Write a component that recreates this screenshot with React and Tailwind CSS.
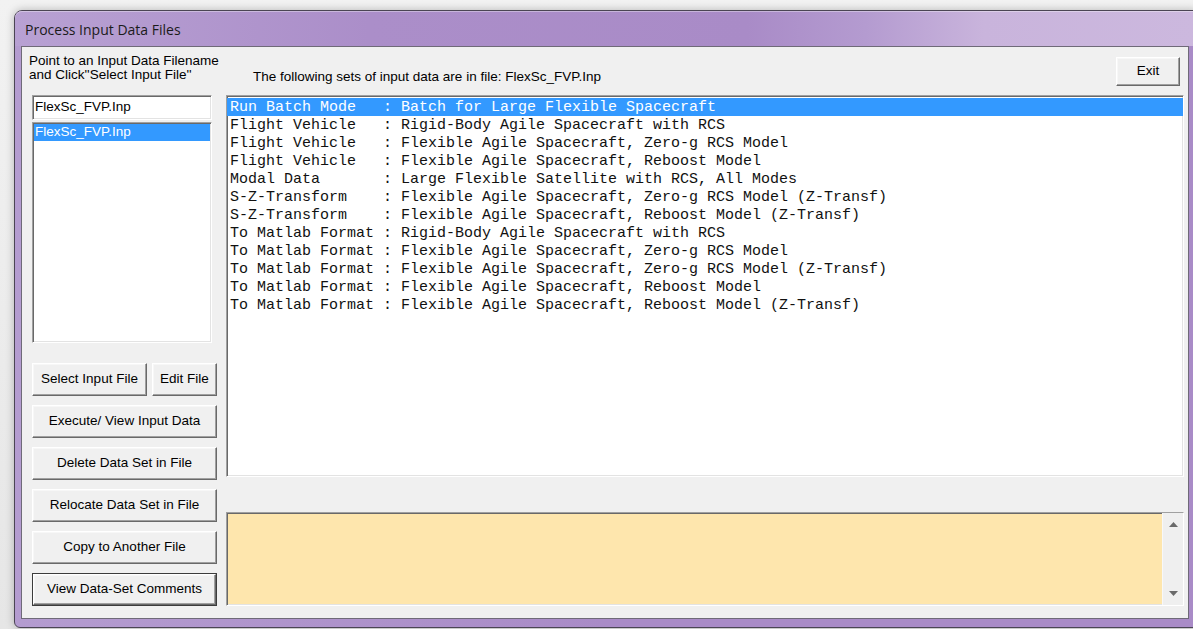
import React, { useState } from "react";

const ui = "font-['Liberation_Sans',Arial,sans-serif] text-[13.5px] text-black";
const mono = "font-['Liberation_Mono','Courier_New',monospace] text-[15px] text-[#111]";

// classic 3D edges
const sunken =
  "border border-t-[#a0a0a0] border-l-[#a0a0a0] border-r-white border-b-white shadow-[inset_1px_1px_0_#696969,inset_-1px_-1px_0_#e3e3e3]";
const raised =
  "border border-t-white border-l-white border-r-[#696969] border-b-[#696969] shadow-[inset_-1px_-1px_0_#a0a0a0,inset_1px_1px_0_#f7f7f7] bg-[#f0f0f0]";

const dataSets = [
  "Run Batch Mode   : Batch for Large Flexible Spacecraft",
  "Flight Vehicle   : Rigid-Body Agile Spacecraft with RCS",
  "Flight Vehicle   : Flexible Agile Spacecraft, Zero-g RCS Model",
  "Flight Vehicle   : Flexible Agile Spacecraft, Reboost Model",
  "Modal Data       : Large Flexible Satellite with RCS, All Modes",
  "S-Z-Transform    : Flexible Agile Spacecraft, Zero-g RCS Model (Z-Transf)",
  "S-Z-Transform    : Flexible Agile Spacecraft, Reboost Model (Z-Transf)",
  "To Matlab Format : Rigid-Body Agile Spacecraft with RCS",
  "To Matlab Format : Flexible Agile Spacecraft, Zero-g RCS Model",
  "To Matlab Format : Flexible Agile Spacecraft, Zero-g RCS Model (Z-Transf)",
  "To Matlab Format : Flexible Agile Spacecraft, Reboost Model",
  "To Matlab Format : Flexible Agile Spacecraft, Reboost Model (Z-Transf)",
];

function Button({ children, className = "", isDefault = false }) {
  if (isDefault) {
    return (
      <div className={`border border-[#3c3c3c] ${className}`}>
        <button className={`${raised} ${ui} w-full h-full flex items-center justify-center`}>
          {children}
        </button>
      </div>
    );
  }
  return (
    <button className={`${raised} ${ui} flex items-center justify-center ${className}`}>
      {children}
    </button>
  );
}

export default function App() {
  const [selected, setSelected] = useState(0);

  return (
    <div className="w-[1193px] h-[629px] overflow-hidden bg-gradient-to-b from-[#f2f2f2] to-[#e6e6e6] pl-[14px] pt-[10px]">
      {/* window */}
      <div className="w-[1183px] h-[618px] rounded-tl-[8px] rounded-bl-[6px] border border-[#4b4554] bg-gradient-to-r from-[#b49cd0] via-[#a98bc7] to-[#a98bc7] flex flex-col shadow-[0_0_8px_rgba(0,0,0,0.25)]">
        {/* title bar */}
        <div className="h-[35px] shrink-0 rounded-tl-[7px] flex items-center pl-[10px] pt-[1px] bg-[linear-gradient(90deg,#b8a1d3_0%,#ab8ec9_30%,#a98bc7_62%,#b49bd0_72%,#c9b4dc_82%,#ccb8de_100%)] shadow-[inset_0_1px_0_rgba(255,255,255,0.35)]">
          <span className="font-['Open_Sans','Noto_Sans',sans-serif] text-[14px] text-[#1b1b1b]">
            Process Input Data Files
          </span>
        </div>

        {/* client area */}
        <div className="ml-[6px] mr-[7px] h-[573px] shrink-0 border border-[#6f6a78] bg-[#f0f0f0] flex pt-[7px] pl-[10px] pr-[4px]">
          {/* left column */}
          <div className="w-[185px] shrink-0 flex flex-col">
            <div className={`${ui} leading-[14px] whitespace-nowrap -ml-[3px]`}>
              <div>Point to an Input Data Filename</div>
              <div>and Click''Select Input File''</div>
            </div>

            <div className={`${sunken} mt-[13px] w-[180px] h-[25px] bg-white flex items-center pl-[2px] ${ui}`}>
              FlexSc_FVP.Inp
            </div>

            <div className={`${sunken} mt-[2px] w-[180px] h-[221px] bg-white p-[1px]`}>
              <div className={`h-[17px] bg-[#3399ff] flex items-center pl-[1px] ${ui} !text-white`}>
                FlexSc_FVP.Inp
              </div>
            </div>

            <div className="mt-[20px] flex gap-[5px] h-[33px]">
              <Button className="w-[115px] h-[33px]">Select Input File</Button>
              <Button className="flex-1 h-[33px]">Edit File</Button>
            </div>
            <Button className="mt-[9px] h-[33px] w-full">Execute/ View Input Data</Button>
            <Button className="mt-[9px] h-[33px] w-full">Delete Data Set in File</Button>
            <Button className="mt-[9px] h-[33px] w-full">Relocate Data Set in File</Button>
            <Button className="mt-[9px] h-[33px] w-full">Copy to Another File</Button>
            <Button className="mt-[9px] h-[33px] w-full" isDefault>
              View Data-Set Comments
            </Button>
          </div>

          {/* right column */}
          <div className="ml-[9px] flex-1 flex flex-col">
            <div className="h-[41px] flex">
              <div className={`${ui} pl-[27px] pt-[16px] leading-[14px]`}>
                The following sets of input data are in file: FlexSc_FVP.Inp
              </div>
              <Button className="ml-auto mr-[4px] mt-[3px] w-[64px] h-[29px]">Exit</Button>
            </div>

            <div className={`${sunken} h-[382px] bg-white pt-[2px] overflow-hidden`}>
              {dataSets.map((row, i) => (
                <div
                  key={i}
                  onClick={() => setSelected(i)}
                  className={`h-[18px] leading-[20px] pl-[3px] whitespace-pre overflow-hidden ${mono} ${
                    i === selected ? "bg-[#3399ff] !text-white" : ""
                  }`}
                >
                  {row}
                </div>
              ))}
            </div>

            <div className={`${sunken} mt-[35px] h-[94px] bg-[#fee6ad] flex`}>
              <div className="flex-1" />
              <div className="w-[21px] bg-[#efefef] border-l border-[#f8f8f8] flex flex-col items-center justify-between py-[9px]">
                <svg width="9" height="5" viewBox="0 0 9 5">
                  <path d="M0 5 L4.5 0 L9 5 Z" fill="#6a6a6a" />
                </svg>
                <svg width="9" height="5" viewBox="0 0 9 5">
                  <path d="M0 0 L4.5 5 L9 0 Z" fill="#6a6a6a" />
                </svg>
              </div>
            </div>
          </div>
        </div>
      </div>
    </div>
  );
}
